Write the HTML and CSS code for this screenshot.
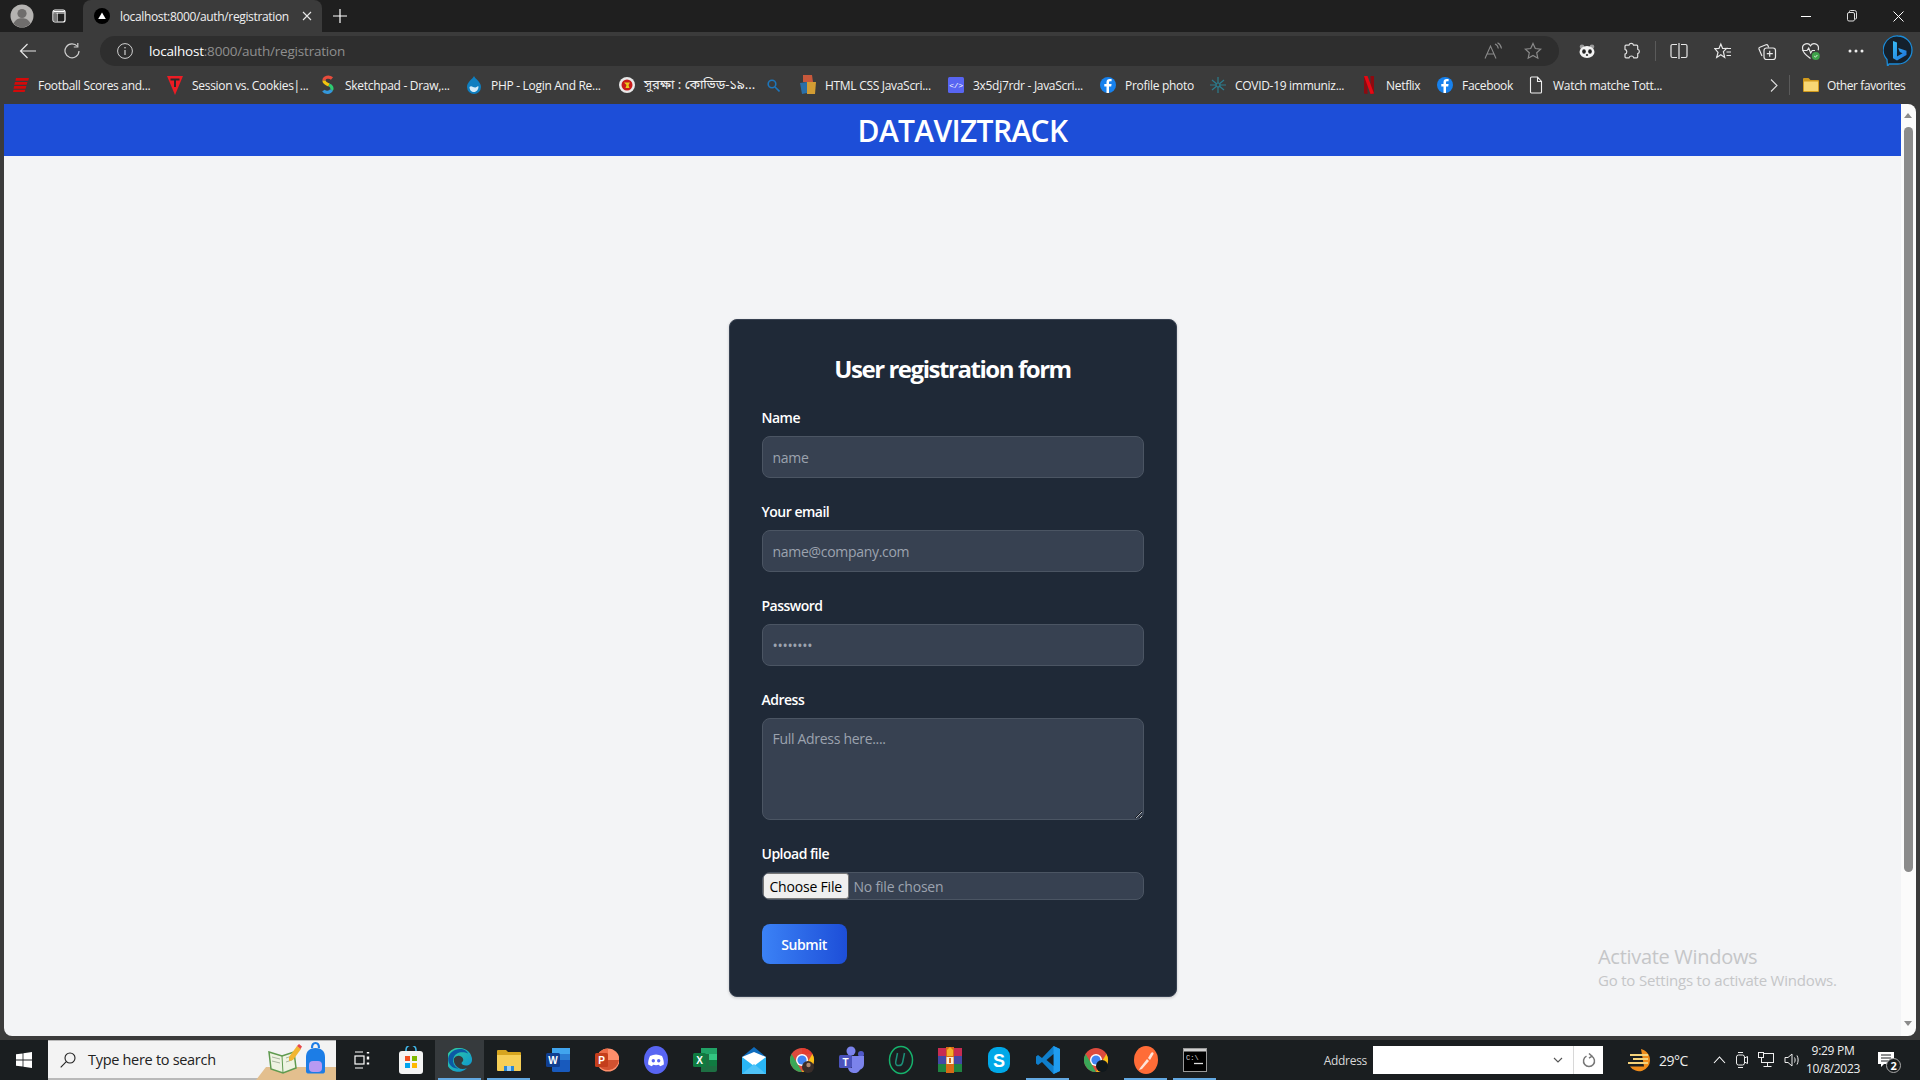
FILE: index.html
```html
<!DOCTYPE html>
<html lang="en">
<head>
<meta charset="utf-8">
<title>DataVizTrack</title>
<link rel="stylesheet" href="styles.css">
</head>
<body>
<div class="tabstrip">
  <div class="profile"><svg width="24" height="24" viewBox="0 0 24 24"><circle cx="12" cy="12" r="11.5" fill="#b5b3b1"/><circle cx="12" cy="9.5" r="4.6" fill="#6f6d6c"/><path d="M3.5 19.5c2-4 5-5.2 8.5-5.2s6.500 1.200 8.500 5.200A11.500 11.500 0 0 1 3.500 19.500z" fill="#6f6d6c"/></svg></div>
  <div class="workspace"><svg width="16" height="16" viewBox="0 0 16 16" fill="none" stroke="#fff" stroke-width="1.200"><rect x="2" y="2" width="12" height="12" rx="2"/><path d="M2.500 3.500h11M2.500 5h11M6 5.500V13.500"/><path d="M2.500 5.500H6V13.500H2.500z" fill="#777" stroke="none"/></svg></div>
  <div class="tab">
    <svg class="favicon" width="16" height="16" viewBox="0 0 16 16"><circle cx="8" cy="8" r="8" fill="#000"/><path d="M8 4.500l3.800 6.500H4.200z" fill="#fff"/></svg>
    <span class="tab-title">localhost:8000/auth/registration</span>
    <svg class="tab-close" width="10" height="10" viewBox="0 0 10 10" stroke="#e8e8e8" stroke-width="1.100"><path d="M1 1l8 8M9 1l-8 8"/></svg>
  </div>
  <svg class="newtab" width="14" height="14" viewBox="0 0 14 14" stroke="#fff" stroke-width="1.200"><path d="M7 0v14M0 7h14"/></svg>
  <div class="winctl">
    <svg width="10" height="10" viewBox="0 0 10 10" stroke="#fff"><path d="M0 5.500h10"/></svg>
    <svg width="10" height="12" viewBox="0 0 10 12" fill="none" stroke="#ddd"><rect x=".5" y="2.500" width="7" height="8.500" rx="1.500"/><path d="M2.500 2.500V1.500a1 1 0 0 1 1-1h4a2 2 0 0 1 2 2V8a1 1 0 0 1-1 1h-1"/></svg>
    <svg width="11" height="11" viewBox="0 0 11 11" stroke="#fff"><path d="M.5.5l10 10M10.500.5l-10 10"/></svg>
  </div>
</div>

<div class="toolbar">
  <svg class="tb-back" width="18" height="16" viewBox="0 0 18 16" fill="none" stroke="#e6e6e6" stroke-width="1.200"><path d="M8.500 1L1.500 8l7 7M1.500 8H17"/></svg>
  <svg class="tb-reload" width="16" height="18" viewBox="0 0 16 18" fill="none" stroke="#cfcfcf" stroke-width="1.200"><path d="M13.500 4.500A7 7 0 1 0 15 9"/><path d="M13.800 1v4h-4"/></svg>
  <div class="addr">
    <svg width="16" height="16" viewBox="0 0 16 16" fill="none" stroke="#d0d0d0"><circle cx="8" cy="8" r="7.400"/><path d="M8 7v5" stroke-width="1.200"/><circle cx="8" cy="4.800" r=".8" fill="#d0d0d0" stroke="none"/></svg>
    <span class="url"><b>localhost</b>:8000/auth/registration</span>
    <span class="spring"></span>
    <svg class="addr-read" width="20" height="18" viewBox="0 0 20 18" fill="none" stroke="#8a8a8a" stroke-width="1.100"><path d="M1 16.500L6.500 4l5.500 12.500M3 12h7"/><path d="M11 2c2 .8 3 2.200 3.300 4.500M13.500.8c2 1 3.600 2.800 4 5.700"/></svg>
    <svg width="18" height="18" viewBox="0 0 18 18" fill="none" stroke="#8a8a8a" stroke-width="1.200"><path d="M9 1.500l2.300 5 5.400.6-4 3.700 1.100 5.400L9 13.500l-4.800 2.700 1.100-5.400-4-3.700 5.400-.6z"/></svg>
  </div>
  <div class="tb-tools">
    <svg width="16" height="14" viewBox="0 0 16 14"><circle cx="3" cy="2.800" r="2.300" fill="#9a9a9a"/><circle cx="13" cy="2.800" r="2.300" fill="#9a9a9a"/><ellipse cx="8" cy="8" rx="7.500" ry="6" fill="#f2f2f2"/><ellipse cx="5" cy="7.500" rx="1.800" ry="2.300" fill="#222"/><ellipse cx="11" cy="7.500" rx="1.800" ry="2.300" fill="#222"/><ellipse cx="8" cy="11" rx="1.200" ry=".9" fill="#333"/></svg>
    <svg width="18" height="18" viewBox="0 0 18 18" fill="none" stroke="#e0e0e0" stroke-width="1.200"><path d="M7 3.200a2.300 2.300 0 0 1 4.500 0h3.200c.6 0 1 .4 1 1v3a2.300 2.300 0 0 1 0 4.400v3.200c0 .6-.4 1-1 1H11.800a2.500 2.500 0 0 0-4.800 0H4c-.6 0-1-.4-1-1v-2.600a2.500 2.500 0 0 0 0-4.800V4.200c0-.6.400-1 1-1z"/></svg>
    <span class="tool-sep"></span>
    <svg width="18" height="16" viewBox="0 0 18 16" fill="none" stroke="#e8e8e8" stroke-width="1.200"><path d="M7 1.500H2.500a1.500 1.500 0 0 0-1.500 1.500v10a1.500 1.500 0 0 0 1.500 1.500H7M11 1.500h4.500A1.500 1.500 0 0 1 17 3v10a1.500 1.500 0 0 1-1.500 1.500H11M9 0v16"/></svg>
    <svg width="18" height="18" viewBox="0 0 18 18" fill="none" stroke="#e8e8e8" stroke-width="1.200"><path d="M6.800 2l1.800 4.500 4-.1-3.200 3.300 1.300 5.800-3.900-2.700-4.100 2.700 1.300-5.200L.8 6.600l4.200-.2zM12 6.500h5M12.500 10h4.500M12.500 13.500h4.500"/></svg>
    <svg width="20" height="20" viewBox="0 0 20 20" fill="none" stroke="#e8e8e8" stroke-width="1.200"><path d="M5 15L2 8c-.3-.8 0-1.500.8-1.800L9 3.700c.8-.3 1.500 0 1.900.8l.8 1.900"/><rect x="7" y="7" width="11.500" height="11.500" rx="2.500"/><path d="M12.700 9.800v6M9.800 12.700h6"/></svg>
    <svg width="20" height="20" viewBox="0 0 20 20" fill="none"><path d="M9.500 17.500C5 14 1.500 11.500 1.500 7A4.300 4.300 0 0 1 9.500 4.800 4.300 4.300 0 0 1 17.500 7c0 .8-.1 1.500-.4 2.200" stroke="#e8e8e8" stroke-width="1.200"/><path d="M1.500 9.500H6l1.700-2.500 2 5 1.500-2.500H14" stroke="#e8e8e8" stroke-width="1.100"/><circle cx="14.800" cy="15" r="4" fill="#3fa24a"/><path d="M13.200 15l1.200 1.200 2-2.200" stroke="#dff0df"/></svg>
    <svg width="16" height="4" viewBox="0 0 16 4" fill="#eee"><circle cx="2" cy="2" r="1.500"/><circle cx="8" cy="2" r="1.500"/><circle cx="14" cy="2" r="1.500"/></svg>
    <svg width="30" height="32" viewBox="0 0 30 32"><defs><linearGradient id="bg1" x1="0" y1="0" x2="1" y2="1"><stop offset="0" stop-color="#37bdf8"/><stop offset="1" stop-color="#1d6fd8"/></linearGradient></defs><path d="M15 1a14 14 0 0 1 0 28H6l-1.500 2.500L4 24.500A14 14 0 0 1 15 1z" fill="#14202c" stroke="#1b8bd8" stroke-width="1.300"/><path d="M10 6l4 1.400v14l5.600-3.200-2.800-1.300-1.600-4 8.300 2.900v4.200L14 25.500l-4-2.200z" fill="url(#bg1)"/></svg>
  </div>
</div>

<div class="bookmarks">
  <div class="bm"><svg width="16" height="16" viewBox="0 0 16 16"><path d="M3 1h13l-.8 2.800H2.400zM2 5h12.500l-.8 2.800H1.200zM1.200 8.900h12.200l-.8 2.900H.5zM.6 12.800h11.800L11.600 15H0z" fill="#d40a0a"/></svg><span>Football Scores and...</span></div>
  <div class="bm"><svg width="16" height="20" viewBox="0 0 16 20"><path d="M0 1h16l-8 19z" fill="#ec1c24"/><path d="M3.500 3.500h9v2H9V12H7V5.500H3.500z" fill="#2a2a2a"/></svg><span>Session vs. Cookies|...</span></div>
  <div class="bm"><svg width="16" height="20" viewBox="-2 0 16 20" fill="none" stroke-width="3.200"><path d="M10 3.500C7 1 2 2 2 5.500" stroke="#e74c3c"/><path d="M2 5.500c0 3 3 3.500 5 4.500" stroke="#f1c40f"/><path d="M7 10c3 1 3.500 3.500 2.500 5" stroke="#2ecc71"/><path d="M9.500 15C8 18 3 18 1.500 15.500" stroke="#3498db"/></svg><span>Sketchpad - Draw,...</span></div>
  <div class="bm"><svg width="16" height="18" viewBox="0 0 16 18"><path d="M8 0c1 3 7 5.500 7 11a7 7 0 0 1-14 0C1 5.500 7 3 8 0z" fill="#0f7fc0"/><path d="M3.500 11c2-2 4 1 6 .5s2-1.500 3-1c0 3-2 5.500-4.500 5.500S3.500 14 3.500 11z" fill="#d4ecf9"/></svg><span>PHP - Login And Re...</span></div>
  <div class="bm"><svg width="16" height="16" viewBox="0 0 16 16"><circle cx="8" cy="8" r="8" fill="#e9e9e9"/><circle cx="8" cy="8" r="5.500" fill="#c81a1a"/><path d="M5 5.500h6L9.500 8l1 3H6.500l1-3z" fill="#e8c81c"/></svg><span class="bn">সুরক্ষা : কোভিড-১৯...</span></div>
  <div class="bm"><svg width="13" height="13" viewBox="0 0 13 13" fill="none" stroke="#1d76bb" stroke-width="1.600"><circle cx="5" cy="5" r="3.800"/><path d="M8 8l4.500 4.500"/></svg></div>
  <div class="bm"><svg width="16" height="20" viewBox="0 0 16 20"><path d="M3 0h9l1 7H3z" fill="#c7583b"/><path d="M0 8l7-1v11l-5 1z" fill="#2a6fa8"/><path d="M7 7h9l-1 12H7z" fill="#d29c33"/></svg><span>HTML CSS JavaScri...</span></div>
  <div class="bm"><svg width="16" height="16" viewBox="0 0 16 16"><rect width="16" height="16" rx="1.500" fill="#5865f2"/><text class="code-glyph" x="8" y="11" text-anchor="middle">&lt;/&gt;</text></svg><span>3x5dj7rdr - JavaScri...</span></div>
  <div class="bm"><svg width="16" height="16" viewBox="0 0 16 16"><circle cx="8" cy="8" r="8" fill="#1781ed"/><path d="M9 16V9.500h2.200l.4-2.500H9V5.500c0-.8.300-1.200 1.300-1.200h1.300V2.100C11 2 10.300 2 9.700 2 7.800 2 6.500 3.100 6.500 5.200V7H4.300v2.500h2.200V16z" fill="#fff"/></svg><span>Profile photo</span></div>
  <div class="bm"><svg width="16" height="16" viewBox="0 0 16 16" fill="none" stroke="#2c7d8e" stroke-width="1.200"><path d="M8 0v16M2 3l12 10M14 3L2 13M0 8h16"/><circle cx="8" cy="8" r="2" fill="#3b3b3b"/></svg><span>COVID-19 immuniz...</span></div>
  <div class="bm"><svg width="16" height="18" viewBox="-2 0 16 18"><path d="M1 0h3.500v18L1 17.500z" fill="#8d0a10"/><path d="M7.500 0H11v17.500L7.500 18z" fill="#8d0a10"/><path d="M1 0h3.500L11 17.500 7.500 18z" fill="#e50914"/></svg><span>Netflix</span></div>
  <div class="bm"><svg width="16" height="16" viewBox="0 0 16 16"><circle cx="8" cy="8" r="8" fill="#1781ed"/><path d="M9 16V9.500h2.200l.4-2.500H9V5.500c0-.8.300-1.200 1.300-1.200h1.300V2.100C11 2 10.300 2 9.700 2 7.800 2 6.500 3.100 6.500 5.200V7H4.300v2.500h2.200V16z" fill="#fff"/></svg><span>Facebook</span></div>
  <div class="bm"><svg width="16" height="18" viewBox="-1.500 0 16 18" fill="none" stroke="#eee" stroke-width="1.100"><path d="M1 2a1 1 0 0 1 1-1h6l4 4.500V16a1 1 0 0 1-1 1H2a1 1 0 0 1-1-1zM8 1v4.500h4"/></svg><span>Watch matche Tott...</span></div>
  <div class="bm-end">
    <svg width="8" height="13" viewBox="0 0 8 13" fill="none" stroke="#ddd" stroke-width="1.100"><path d="M1 .5l6 6-6 6"/></svg>
    <span class="bm-sep"></span>
    <svg width="16" height="16" viewBox="0 0 16 16"><path d="M0 2a1 1 0 0 1 1-1h4.500l2 2H15a1 1 0 0 1 1 1v10a1 1 0 0 1-1 1H1a1 1 0 0 1-1-1z" fill="#d19a1d"/><path d="M1 4.500h14V14H1z" fill="#f7d774"/></svg>
    <span>Other favorites</span>
  </div>
</div>

<div class="viewport">
  <main class="page">
    <header class="site-header"><h1>DATAVIZTRACK</h1></header>
    <section class="content">
      <form class="card">
        <h2>User registration form</h2>
        <div class="field"><label for="name">Name</label><input id="name" type="text" placeholder="name"></div>
        <div class="field"><label for="email">Your email</label><input id="email" type="email" placeholder="name@company.com"></div>
        <div class="field"><label for="pw">Password</label><input id="pw" type="password" placeholder="••••••••"></div>
        <div class="field"><label for="addr">Adress</label><textarea id="addr" placeholder="Full Adress here...."></textarea></div>
        <div class="field"><label for="file">Upload file</label><input id="file" class="file" type="file"></div>
        <button type="button" class="submit">Submit</button>
      </form>
    </section>
    <div class="activate"><p class="a1">Activate Windows</p><p class="a2">Go to Settings to activate Windows.</p></div>
  </main>
  <aside class="scrollbar">
    <span class="arrow-up"></span>
    <span class="thumb"></span>
    <span class="arrow-down"></span>
  </aside>
</div>

<footer class="taskbar">
  <div class="start"><svg width="16" height="16" viewBox="0 0 16 16" fill="#fff"><path d="M0 2.300l6.600-.9v6.200H0zM7.400 1.300L16 0v7.600H7.400zM0 8.400h6.600v6.200L0 13.700zM7.400 8.400H16V16l-8.600-1.300z"/></svg></div>
  <div class="search">
    <svg width="16" height="16" viewBox="0 0 16 16" fill="none" stroke="#222" stroke-width="1.100"><circle cx="10" cy="6" r="5"/><path d="M6.300 9.700L.7 15.300"/></svg>
    <span>Type here to search</span>
    <svg class="search-art" width="80" height="40" viewBox="0 0 80 40"><path d="M0 40l10-13h70v13z" fill="#e3bf8e"/><g transform="translate(13 9)"><path d="M0 3l13 4 12-4 2 16-13 5-12-4z" fill="#eef3e2" stroke="#5f9a4f" stroke-width="1.500"/><path d="M13 7l1 17" stroke="#5f9a4f"/><path d="M3 8l8 2M3 12l8 2M17 9l6-2M17 13l6-2" stroke="#a9b5a0"/></g><path d="M33 17l8-11 4 3-8 11-4 1z" fill="#f2b632"/><path d="M41 6l2-2 3 2.500-1.500 2.500z" fill="#e8484a"/><path d="M50 17c0-6 4-9 9.500-9S69 11 69 17v14c0 2-1 2.500-3 2.500H53c-2 0-3-.5-3-2.500z" fill="#1c7de6"/><path d="M56 8c0-3 1.500-5 3.500-5S63 5 63 8" fill="none" stroke="#1c7de6" stroke-width="2.200"/><rect x="53" y="21" width="13" height="11" rx="4" fill="#b79af2"/></svg>
  </div>
  <div class="apps">
    <div class="app"><svg width="16" height="18" viewBox="0 0 16 18" fill="none" stroke="#fff" stroke-width="1.200"><path d="M1 1h8M1 17h8"/><rect x="1" y="5" width="9" height="8"/><path d="M14 1v1.500M14 5.500v3M14 11.500v2" stroke-width="2.400"/></svg></div>
    <div class="app"><svg width="24" height="28" viewBox="0 0 24 28"><path d="M7 6V4a5 5 0 0 1 10 0v2" fill="none" stroke="#3fb6e8" stroke-width="1.600"/><rect y="5" width="24" height="23" rx="3" fill="#f4f4f4"/><rect x="6" y="10" width="5" height="5" fill="#f25022"/><rect x="13" y="10" width="5" height="5" fill="#7fba00"/><rect x="6" y="17" width="5" height="5" fill="#00a4ef"/><rect x="13" y="17" width="5" height="5" fill="#ffb900"/></svg></div>
    <div class="app active"><svg width="24" height="24" viewBox="0 0 24 24"><defs><linearGradient id="eg" x1="0" y1="0" x2="1" y2="1"><stop offset="0" stop-color="#34d399"/><stop offset="1" stop-color="#0a8fd8"/></linearGradient></defs><path d="M12 0a12 12 0 0 1 12 12c0 3.500-3 5.500-6 5.500-2.500 0-4.500-1-4.500-2.500 0-1 1.800-1.200 1.800-3.300A5 5 0 0 0 6 10.500a9 9 0 0 0 13 9.500A12 12 0 1 1 12 0z" fill="url(#eg)"/><path d="M.2 10.500C1 5 6 1 12 1c4 0 7 2 8 4.500C15 3 7 4 5.500 10a8 8 0 0 0 5 10.500C5 21 0 17 .2 10.500z" fill="#0c59a4"/></svg></div>
    <div class="app running"><svg width="24" height="22" viewBox="0 0 24 22"><path d="M0 2a1 1 0 0 1 1-1h8l2 2h12a1 1 0 0 1 1 1v6H0z" fill="#d6a51f"/><path d="M0 6h24v15a1 1 0 0 1-1 1H1a1 1 0 0 1-1-1z" fill="#f6cf57"/><path d="M7 17h10v5H7z" fill="#2b87d3"/><path d="M10 17h4v5h-4z" fill="#9bd0f7"/></svg></div>
    <div class="app"><svg width="24" height="24" viewBox="0 0 24 24"><rect x="6" width="18" height="24" rx="1.500" fill="#185abd"/><rect x="6" y="0" width="18" height="6" fill="#41a5ee"/><rect x="6" y="6" width="18" height="6" fill="#2b7cd3"/><rect y="5" width="14" height="14" rx="1.500" fill="#103f91"/><text class="office-glyph" x="7" y="16" text-anchor="middle">W</text></svg></div>
    <div class="app"><svg width="24" height="24" viewBox="0 0 24 24"><circle cx="13" cy="12" r="11.500" fill="#ff8f6b"/><path d="M13 .5V12H1.500A11.500 11.500 0 0 1 13 .5z" fill="#ed6c47"/><path d="M2 12h22A11.500 11.500 0 0 1 2 15z" fill="#d35230"/><rect y="5" width="13" height="14" rx="1.500" fill="#c43e1c"/><text class="office-glyph" x="6.500" y="16" text-anchor="middle">P</text></svg></div>
    <div class="app"><svg width="24" height="28" viewBox="0 0 24 28"><ellipse cx="12" cy="14" rx="12" ry="14" fill="#5865f2"/><path d="M6 10c4-2 8-2 12 0 1.500 3 2 6 1.800 8.500-1.200.9-2.500 1.500-3.800 1.800l-1-1.500c-2 .5-4 .5-6 0l-1 1.500c-1.300-.3-2.600-.9-3.800-1.800C4 16 4.500 13 6 10z" fill="#fff"/><circle cx="9.300" cy="14.800" r="1.700" fill="#5865f2"/><circle cx="14.700" cy="14.800" r="1.700" fill="#5865f2"/></svg></div>
    <div class="app"><svg width="24" height="26" viewBox="0 0 24 26"><path d="M8 1h14a2 2 0 0 1 2 2v20a2 2 0 0 1-2 2H8z" fill="#1d6f42"/><path d="M8 1h16v6H8z" fill="#21a366"/><path d="M16 7h8v6h-8z" fill="#33c481"/><path d="M16 13h8v6h-8z" fill="#107c41"/><rect y="6" width="13" height="14" rx="1.500" fill="#0f7b40"/><text class="office-glyph" x="6.500" y="17" text-anchor="middle">X</text></svg></div>
    <div class="app"><svg width="24" height="27" viewBox="0 0 24 27"><path d="M12 0l12 10v17H0V10z" fill="#0f6cbd"/><path d="M0 10h24v17H0z" fill="#29b6f6"/><path d="M0 10l12 9 12-9-12-5z" fill="#fff"/><path d="M0 27l12-10 12 10z" fill="#4fc3f7"/></svg></div>
    <div class="app"><svg width="26" height="28" viewBox="0 0 26 28"><circle cx="12" cy="14" r="12" fill="#dd4b3e"/><path d="M12 2a12 12 0 0 1 10.400 6H12z" fill="#e53c2f"/><path d="M22.400 8A12 12 0 0 1 12 26l5-9z" fill="#fbc116"/><path d="M12 26A12 12 0 0 1 1.600 8l5.400 9z" fill="#3aa757"/><circle cx="12" cy="14" r="6" fill="#fff"/><circle cx="12" cy="14" r="4.600" fill="#4285f4"/><circle cx="18" cy="21" r="6" fill="#3a2e2a"/><circle cx="18.500" cy="19" r="2.200" fill="#b08a72"/></svg></div>
    <div class="app"><svg width="26" height="28" viewBox="0 0 26 28"><rect x="0" y="9" width="13" height="13" rx="1.500" fill="#4b53bc"/><text class="office-glyph" x="6.500" y="19.500" text-anchor="middle">T</text><circle cx="12" cy="5" r="4.500" fill="#7b83eb"/><circle cx="22" cy="8" r="3" fill="#5059c9"/><path d="M13 10h12v8a6 6 0 0 1-4 5.700A6.500 6.500 0 0 1 9 22h4z" fill="#7b83eb"/></svg></div>
    <div class="app"><svg width="26" height="30" viewBox="0 0 26 30" fill="none"><ellipse cx="13" cy="15" rx="11.500" ry="13.500" stroke="#16b26c" stroke-width="1.500"/><path d="M9.500 8l-1.800 9c-.4 2.300 1 3.600 3 3.600 2.400 0 3.600-1.500 4-3.600L16.500 8" stroke="#1d8f78" stroke-width="1.500"/></svg></div>
    <div class="app"><svg width="24" height="26" viewBox="0 0 24 26"><rect width="24" height="8" y="1" fill="#c72c52"/><rect width="24" height="8" y="9" fill="#4349a6"/><rect width="24" height="8" y="17" fill="#1f8442"/><rect x="8" y="0" width="8" height="26" fill="#d66a16"/><rect x="8.500" y="10" width="7" height="7" fill="#f8efd8"/><rect x="11" y="11" width="2" height="5" fill="#d66a16"/><path d="M9 3l3-3 3 3v6H9z" fill="#f2b32a"/></svg></div>
    <div class="app"><svg width="22" height="26" viewBox="0 0 22 26"><rect width="22" height="26" rx="9" fill="#00a8e8"/><text class="skype-glyph" x="11" y="20" text-anchor="middle">S</text></svg></div>
    <div class="app running"><svg width="24" height="28" viewBox="0 0 24 28"><path d="M17.500 0L24 3v22l-6.500 3L6 16l-4 3-2-1.500v-7L2 9l4 3z" fill="#0f7fcc"/><path d="M17.500 0L24 3v22l-6.500 3z" fill="#1f9cf0"/><path d="M17.500 8L10.500 14l7 6z" fill="#1a1e20"/></svg></div>
    <div class="app"><svg width="26" height="28" viewBox="0 0 26 28"><circle cx="12" cy="14" r="12" fill="#dd4b3e"/><path d="M22.400 8A12 12 0 0 1 12 26l5-9z" fill="#fbc116"/><path d="M12 26A12 12 0 0 1 1.600 8l5.400 9z" fill="#3aa757"/><circle cx="12" cy="14" r="6" fill="#fff"/><circle cx="12" cy="14" r="4.600" fill="#4285f4"/><circle cx="18" cy="20" r="6" fill="#10181c"/></svg></div>
    <div class="app running"><svg width="24" height="28" viewBox="0 0 24 28"><ellipse cx="12" cy="14" rx="12" ry="14" fill="#ff6c37"/><path d="M6 22l7-9 2 2-7 8-3 1zM14 12l3-5c1-1.500 3-.8 2.500 1L16 14z" fill="#fde3d8"/></svg></div>
    <div class="app running"><svg width="24" height="24" viewBox="0 0 24 24"><rect x=".5" y=".5" width="23" height="23" fill="#000" stroke="#9a9a9a"/><rect x="1" y="1" width="22" height="2.500" fill="#cfcfcf"/><text class="cmd-glyph" x="3" y="12">C:\</text><path d="M11 15.500h9" stroke="#ddd" stroke-width="1.300"/></svg></div>
  </div>
  <span class="spring"></span>
  <div class="tray">
    <span class="tray-label">Address</span>
    <div class="tray-input">
      <svg class="chev" width="10" height="6" viewBox="0 0 10 6" fill="none" stroke="#555" stroke-width="1.100"><path d="M1 1l4 4 4-4"/></svg>
      <span class="go"><svg width="14" height="15" viewBox="0 0 14 15" fill="none" stroke="#777" stroke-width="1.500"><path d="M9.500 3.200A5.500 5.500 0 1 1 4.500 3.200"/><path d="M7 .5l3 2.700-3 2"/></svg></span>
    </div>
    <svg class="weather" width="24" height="24" viewBox="0 0 24 24"><path d="M14 1c6 2 9 6 9 11a11 11 0 0 1-20 6.500h14z" fill="#f08c1a"/><path d="M3 7h18M6 11h15M1 15h20" stroke="#f5d27a" stroke-width="2"/></svg>
    <span class="temp">29°C</span>
    <svg class="caret" width="13" height="8" viewBox="0 0 13 8" fill="none" stroke="#fff" stroke-width="1.100"><path d="M1 7l5.500-6L12 7"/></svg>
    <svg class="sys" width="12" height="18" viewBox="0 0 12 18" fill="none" stroke="#eee"><rect x=".5" y="4" width="8" height="10" rx="2"/><path d="M8.500 7l3-1.500v7l-3-1.500M2 1.500h5M2 16.500h5"/></svg>
    <svg class="sys" width="16" height="16" viewBox="0 0 16 16" fill="none" stroke="#eee"><rect x="3.500" y="1.500" width="12" height="9"/><rect x=".5" y=".5" width="5" height="5" fill="#1a1e20"/><path d="M9.500 10.500v4M5.500 14.500h8"/></svg>
    <svg class="sys" width="16" height="16" viewBox="0 0 16 16" fill="none" stroke="#eee"><path d="M1 5.500h3L8 2v12l-4-3.500H1zM10.500 5.500c.8 1.500.8 3.500 0 5M13 3.500c1.500 2.700 1.500 6.300 0 9"/></svg>
    <div class="clock"><span>9:29 PM</span><span>10/8/2023</span></div>
    <div class="notif">
      <svg width="16" height="16" viewBox="0 0 16 16" fill="#fff"><path d="M0 0h16v12H6l-3 3v-3H0z"/><path d="M3 3h10M3 6h10M3 9h7" stroke="#1a1e20" stroke-width="1"/></svg>
      <span class="badge">2</span>
    </div>
  </div>
</footer>
</body>
</html>
```
FILE: styles.css
```css
* { box-sizing: border-box; }
html, body { margin: 0; height: 100%; }
body {
  display: flex;
  flex-direction: column;
  height: 1080px;
  overflow: hidden;
  background: #3b3b3b;
  font-family: "Open Sans", "Noto Sans", "Liberation Sans", sans-serif;
  color: #fff;
}
svg { flex: none; display: block; }
.spring { flex: 1; }

/* Tab strip */
.tabstrip {
  height: 32px;
  background: #1f1f1f;
  display: flex;
  align-items: center;
}
.profile { margin-left: 10px; width: 24px; }
.workspace { margin-left: 17px; width: 16px; }
.tab {
  margin-left: 16px;
  width: 239px;
  height: 32px;
  background: #3b3b3b;
  border-radius: 8px 8px 0 0;
  display: flex;
  align-items: center;
  padding-left: 11px;
}
.tab-title {
  margin-left: 10px;
  width: 176px;
  font-size: 12px;
  letter-spacing: -0.35px;
  color: #f0f0f0;
  white-space: nowrap;
}
.tab-close { margin-left: 6px; }
.newtab { margin-left: 11px; }
.winctl {
  margin-left: auto;
  display: flex;
  align-items: center;
  gap: 36px;
  padding-right: 16px;
}

/* Toolbar */
.toolbar {
  height: 34px;
  padding-top: 4px;
  background: #3b3b3b;
  display: flex;
  align-items: center;
}
.tb-back { margin-left: 19px; }
.tb-reload { margin-left: 27px; }
.addr {
  margin-left: 20px;
  width: 1459px;
  height: 30px;
  border-radius: 15px;
  background: #2e2e2e;
  display: flex;
  align-items: center;
  padding: 0 17px;
}
.url {
  margin-left: 16px;
  font-size: 13.500px;
  letter-spacing: -0.2px;
  color: #8f8f8f;
  white-space: nowrap;
}
.url b { font-weight: 400; color: #fff; }
.addr-read { margin-right: 20px; }
.tb-tools {
  margin-left: 6px;
  display: grid;
  grid-template-columns: 44px 44px 4px 44px 44px 44px 44px 46px 38px;
  align-items: center;
  justify-items: center;
}
.tool-sep { width: 1px; height: 20px; background: #5a5a5a; }

/* Bookmarks */
.bookmarks {
  height: 38px;
  background: #3b3b3b;
  display: grid;
  grid-template-columns: 154px 153px 146px 153px 148px 33px 148px 152px 110px 151px 76px 91px 160px 1fr;
  padding-left: 13px;
  align-items: center;
  font-size: 12px;
}
.bm {
  display: flex;
  align-items: center;
  gap: 9px;
  white-space: nowrap;
  color: #f2f2f2;
  letter-spacing: -0.3px;
  min-width: 0;
}
.bn { font-family: "Noto Sans Bengali", "Noto Sans", "DejaVu Sans", sans-serif; font-size: 13px; letter-spacing: 0; }
.code-glyph {
  font: 8px "Liberation Mono", monospace;
  fill: #fff;
}
.bm-end {
  display: flex;
  align-items: center;
  white-space: nowrap;
  letter-spacing: -0.4px;
  color: #f2f2f2;
  gap: 8px;
  margin-left: 82px;
}
.bm-end svg:first-child { margin-right: 3px; }
.bm-sep { width: 1px; height: 20px; background: #5a5a5a; margin-right: 5px; }

/* Browser viewport */
.viewport {
  flex: none;
  height: 932px;
  margin-left: 4px;
  margin-right: 4px;
  display: flex;
  border-radius: 0 8px 8px 8px;
  overflow: hidden;
}
.page {
  flex: 1;
  background: #f3f4f6;
  position: relative;
  overflow: hidden;
}
.site-header {
  height: 52px;
  background: #1d4ed8;
  display: flex;
  align-items: center;
  justify-content: center;
  padding: 2px 0 0 20px;
}
.site-header h1 {
  margin: 0;
  font-size: 30px;
  font-weight: 600;
  letter-spacing: -0.67px;
  line-height: 36px;
  color: #fff;
}
.content {
  display: flex;
  justify-content: center;
  padding: 163px 0 0;
}
.card {
  width: 448px;
  padding: 32px;
  background: #1f2937;
  border: 1px solid #374151;
  border-radius: 8px;
  box-shadow: 0 1px 3px rgba(0,0,0,.2);
}
.card h2 {
  margin: 0 0 23px;
  padding-top: 1px;
  font-size: 24px;
  line-height: 32px;
  font-weight: 700;
  text-align: center;
  letter-spacing: -1.45px;
  color: #fff;
}
.field { margin-bottom: 24px; }
.field label {
  display: block;
  margin-bottom: 8px;
  font-size: 14px;
  line-height: 20px;
  font-weight: 600;
  letter-spacing: -0.5px;
  color: #fff;
}
input, textarea {
  display: block;
  width: 100%;
  height: 42px;
  padding: 10px;
  font-family: inherit;
  font-size: 14px;
  line-height: 20px;
  letter-spacing: -0.3px;
  color: #fff;
  background: #374151;
  border: 1px solid #4b5563;
  border-radius: 8px;
  outline: none;
}
::placeholder { color: #9ca3af; opacity: 1; }
textarea { height: 102px; resize: vertical; }
.file {
  height: 28px;
  padding: 0;
  line-height: 26px;
  color: #9ca3af;
  font-size: 14px;
  letter-spacing: -0.2px;
}
.file::file-selector-button {
  height: 26px;
  margin-right: 5px;
  padding: 0 6px;
  width: 86px;
  font-family: inherit;
  font-size: 14px;
  letter-spacing: -0.2px;
  color: #000;
  background: #efefef;
  border: 1px solid #767676;
  border-radius: 3px;
}
.submit {
  display: block;
  width: 85px;
  height: 40px;
  border: 0;
  border-radius: 8px;
  background: linear-gradient(to right, #3b82f6, #1d4ed8);
  color: #fff;
  font-family: inherit;
  font-size: 14px;
  font-weight: 600;
  letter-spacing: -0.4px;
}
.activate {
  position: absolute;
  left: 1594px;
  top: 840px;
  color: #c5c6c8;
  white-space: nowrap;
}
.activate p { margin: 0; }
.a1 { font-size: 20px; line-height: 26px; letter-spacing: -0.3px; }
.a2 { font-size: 15px; line-height: 20px; letter-spacing: -0.2px; }

/* Scrollbar */
.scrollbar {
  width: 15px;
  background: #fbfbfb;
  position: relative;
  flex: none;
}
.thumb {
  position: absolute;
  left: 3px;
  top: 23px;
  width: 9px;
  height: 745px;
  border-radius: 5px;
  background: #8b8b8b;
}
.arrow-up, .arrow-down {
  position: absolute;
  left: 3px;
  width: 0;
  height: 0;
  border-left: 4.500px solid transparent;
  border-right: 4.500px solid transparent;
}
.arrow-up { top: 9px; border-bottom: 5px solid #8b8b8b; }
.arrow-down { bottom: 10px; border-top: 5px solid #8b8b8b; }

/* Taskbar */
.taskbar {
  flex: none;
  margin-top: 4px;
  height: 40px;
  background: #1a1e20;
  display: flex;
  align-items: center;
}
.start {
  width: 48px;
  height: 40px;
  display: flex;
  align-items: center;
  padding-left: 16px;
}
.search {
  width: 288px;
  height: 40px;
  background: #f3f3f3;
  border: 1px solid #b9b9b9;
  border-width: 1px 0 2px 0;
  display: flex;
  align-items: center;
  padding-left: 12px;
  position: relative;
  color: #222;
  font-size: 14.500px;
  letter-spacing: -0.3px;
}
.search span { margin-left: 12px; white-space: nowrap; }
.search-art { position: absolute; right: 0; bottom: -2px; }
.apps {
  margin-left: 1px;
  display: grid;
  grid-auto-flow: column;
  grid-auto-columns: 49px;
  height: 40px;
}
.app {
  display: flex;
  align-items: center;
  justify-content: center;
  position: relative;
}
.app.active { background: #363a3d; }
.app.active::after, .app.running::after {
  content: "";
  position: absolute;
  left: 3px;
  right: 3px;
  bottom: 0;
  height: 2px;
  background: #63a9e2;
}
.office-glyph { font: 700 10px "Liberation Sans", sans-serif; fill: #fff; }
.skype-glyph { font: 700 18px "Liberation Sans", sans-serif; fill: #fff; }
.cmd-glyph { font: 7px "Liberation Mono", monospace; fill: #ddd; }
.tray {
  display: flex;
  align-items: center;
  font-size: 12px;
  letter-spacing: -0.3px;
  color: #eee;
}
.tray-label { margin-right: 6px; color: #d8d8d8; }
.tray-input {
  width: 230px;
  height: 28px;
  background: #fff;
  display: flex;
  align-items: center;
  justify-content: flex-end;
}
.chev { margin-right: 10px; }
.go {
  width: 30px;
  height: 28px;
  border-left: 1px solid #d8d8d8;
  display: flex;
  align-items: center;
  justify-content: center;
}
.weather { margin-left: 24px; }
.temp { margin-left: 8px; font-size: 14px; letter-spacing: -0.5px; width: 32px; white-space: nowrap; }
.caret { margin-left: 22px; }
.sys { margin-left: 10px; }
.clock {
  margin-left: 2px;
  width: 62px;
  display: flex;
  flex-direction: column;
  align-items: center;
  line-height: 18px;
  white-space: nowrap;
}
.notif { position: relative; margin-left: 14px; margin-right: 26px; width: 16px; }
.badge {
  position: absolute;
  left: 8px;
  top: 6px;
  width: 15px;
  height: 15px;
  border-radius: 50%;
  border: 1px solid #aaa;
  background: #1a1e20;
  text-align: center;
  font-size: 11px;
  line-height: 13px;
  font-weight: 700;
  color: #fff;
}
```
